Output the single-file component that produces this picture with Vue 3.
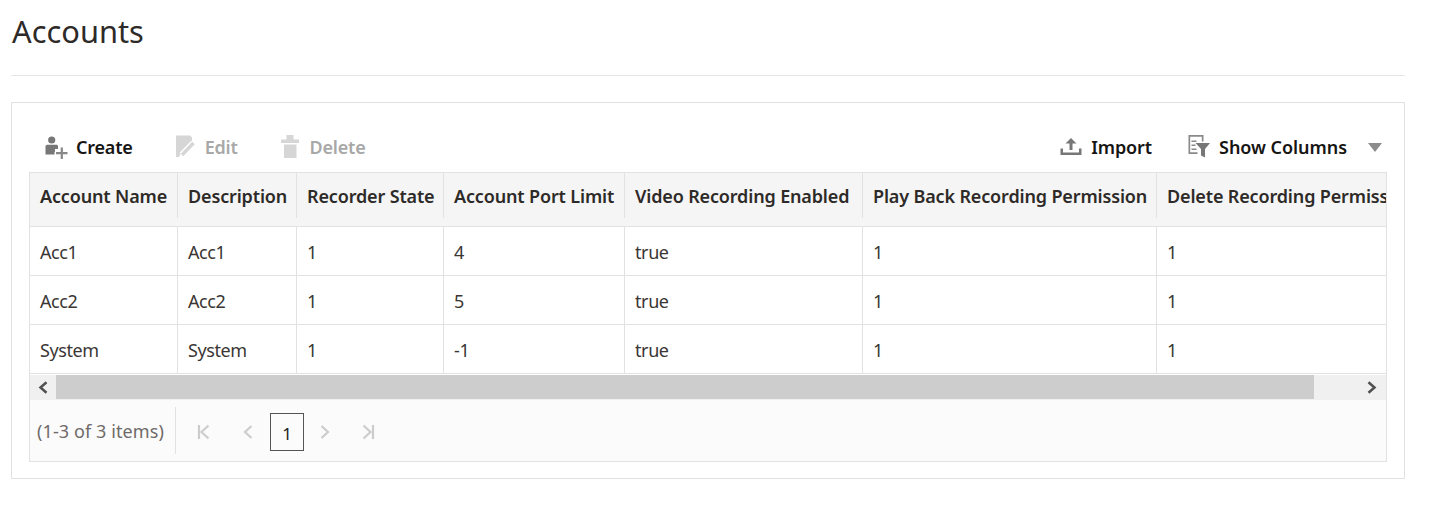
<script setup>
const cols = [
  { title: 'Account Name', w: 148 },
  { title: 'Description', w: 119 },
  { title: 'Recorder State', w: 147 },
  { title: 'Account Port Limit', w: 181 },
  { title: 'Video Recording Enabled', w: 238 },
  { title: 'Play Back Recording Permission', w: 294 },
  { title: 'Delete Recording Permission', w: 260 }
]
const rows = [
  ['Acc1', 'Acc1', '1', '4', 'true', '1', '1'],
  ['Acc2', 'Acc2', '1', '5', 'true', '1', '1'],
  ['System', 'System', '1', '-1', 'true', '1', '1']
]
</script>

<template>
  <div class="page">
    <h1 class="title">Accounts</h1>
    <div class="rule"></div>
    <section class="card">
      <div class="toolbar">
        <div class="group">
          <button class="tool">
            <svg class="ico" width="24" height="24" viewBox="0 0 24 24"><circle cx="7.700" cy="5" r="3.600" fill="#777"/><path d="M1.500 11.500c0-1 .8-1.800 1.800-1.800h9c.8 0 1.500.5 1.700 1.200v3.100h-3v2.800h-0.500v2.700H1.500z" fill="#777"/><path d="M16.700 12.500h2.200V17H23.500v2.200H18.900V24h-2.200V19.200H12V17H16.700z" fill="#888"/></svg>
            <span>Create</span>
          </button>
          <button class="tool off edit">
            <svg class="ico" width="24" height="24" viewBox="0 0 24 24"><path d="M3 .5h14l2 2V6.500L8 18l-2 4H3z" fill="#d6d6d6"/><path d="M20.500 8L9 20" stroke="#fff" stroke-width="6.500" fill="none"/><path d="M20.500 8L9 20" stroke="#d6d6d6" stroke-width="3.500" fill="none"/></svg>
            <span>Edit</span>
          </button>
          <button class="tool off del">
            <svg class="ico" width="24" height="24" viewBox="0 0 24 24"><path d="M8.500 0h7v4.500h5.500V8H3V4.500h5.500z" fill="#d6d6d6"/><path d="M6 9.500h12.500V23H6z" fill="#d6d6d6"/></svg>
            <span>Delete</span>
          </button>
        </div>
        <div class="group">
          <button class="tool imp">
            <svg class="ico" width="24" height="24" viewBox="0 0 24 24"><path d="M12 3l5.500 5.500h-4V15h-3V8.500h-4z" fill="#777"/><path d="M1.500 13.500h2.500v4h16v-4h2.500v6.500h-21z" fill="#777"/></svg>
            <span>Import</span>
          </button>
          <button class="tool cols">
            <svg class="ico" width="24" height="24" viewBox="0 0 24 24"><path d="M1.500 0h15v6.500h-1.700V1.700H3.200v15.600h7.300V19H1.500z" fill="#8a8a8a"/><path d="M4.500 5.500h5V7h-5zM4.500 9.500h4V11h-4zM4.500 13.500h5V15h-5z" fill="#8a8a8a"/><path d="M8.500 8H23l-5 6v8.500l-4-2V14z" fill="#777"/></svg>
            <span>Show Columns</span>
          </button>
          <span class="caret"></span>
        </div>
      </div>

      <div class="grid">
        <div class="viewport">
          <table>
            <colgroup><col v-for="c in cols" :key="c.title" :style="{ width: c.w + 'px' }"></colgroup>
            <thead>
              <tr><th v-for="c in cols" :key="c.title"><span class="th">{{ c.title }}</span></th></tr>
            </thead>
            <tbody>
              <tr v-for="(r, i) in rows" :key="i"><td v-for="(v, j) in r" :key="j">{{ v }}</td></tr>
            </tbody>
          </table>
        </div>
        <div class="scrollbar">
          <span class="arrow">
            <svg width="12" height="13" viewBox="0 0 12 13"><path d="M9.500 1.200L3.500 6.500l6 5.300" fill="none" stroke="#505050" stroke-width="2.500"/></svg>
          </span>
          <div class="thumb"></div>
          <span class="arrow right">
            <svg width="12" height="13" viewBox="0 0 12 13"><path d="M2.500 1.200L8.500 6.500l-6 5.300" fill="none" stroke="#505050" stroke-width="2.500"/></svg>
          </span>
        </div>
        <div class="pager">
          <span class="count">(1-3 of 3 items)</span>
          <div class="pages">
            <svg class="pg first" width="14" height="16" viewBox="0 0 14 16"><path d="M2 1v14M11.500 1.500L4.500 8l7 6.500" fill="none" stroke="#ccc" stroke-width="2.200"/></svg>
            <svg class="pg prev" width="12" height="16" viewBox="0 0 12 16"><path d="M9.500 2L3 8l6.500 6" fill="none" stroke="#ccc" stroke-width="2.200"/></svg>
            <span class="num">1</span>
            <svg class="pg next" width="12" height="16" viewBox="0 0 12 16"><path d="M2.500 2L9 8l-6.500 6" fill="none" stroke="#ccc" stroke-width="2.200"/></svg>
            <svg class="pg last" width="14" height="16" viewBox="0 0 14 16"><path d="M12 1v14M2.500 1.500L9.500 8l-7 6.500" fill="none" stroke="#ccc" stroke-width="2.200"/></svg>
          </div>
        </div>
      </div>
    </section>
  </div>
</template>

<style scoped>
.page {
  width: 1394px;
  margin-left: 11px;
  font-family: "Noto Sans", "Open Sans", sans-serif;
  color: #2e2a28;
}
.title {
  margin: 0;
  height: 75px;
  box-sizing: border-box;
  padding: 10px 0 0 1px;
  font-size: 30.800px;
  line-height: 42px;
  font-weight: 400;
  color: #2e2a28;
}
.rule {
  height: 1px;
  background: #e6e6e6;
  margin-bottom: 26px;
}
.card {
  box-sizing: border-box;
  height: 377px;
  border: 1px solid #e2e2e2;
  padding: 0 17px;
}
.toolbar {
  height: 69px;
  box-sizing: border-box;
  padding: 27px 0 0 15px;
  display: flex;
  justify-content: space-between;
  align-items: flex-start;
}
.group { display: flex; align-items: center; height: 34px; }
.tool {
  display: flex;
  align-items: center;
  gap: 8px;
  border: 0;
  background: none;
  padding: 0;
  font: 600 18px/34px "Noto Sans", "Open Sans", sans-serif;
  letter-spacing: -0.2px;
  color: #161513;
}
.ico { display: block; }
.tool.off { color: #a8a8a8; }
.edit { margin-left: 40px; }
.del { margin-left: 40px; }
.imp { letter-spacing: -0.1px; }
.cols { margin-left: 35px; letter-spacing: -0.05px; }
.caret {
  margin-left: 21px;
  margin-right: 5px;
  width: 0;
  height: 0;
  border-left: 7px solid transparent;
  border-right: 7px solid transparent;
  border-top: 9px solid #8c8c8c;
}
.grid {
  box-sizing: border-box;
  height: 290px;
  border: 1px solid #e2e2e2;
}
.viewport { overflow: hidden; height: 202px; }
table {
  table-layout: fixed;
  border-collapse: separate;
  border-spacing: 0;
  width: 1387px;
}
th {
  height: 54px;
  box-sizing: border-box;
  background: #f5f5f5;
  border-bottom: 1px solid #e2e2e2;
  padding: 0;
  text-align: left;
  font-weight: 600;
  font-size: 18px;
  letter-spacing: -0.15px;
  white-space: nowrap;
  overflow: hidden;
  color: #2e2a28;
  vertical-align: top;
}
.th {
  display: block;
  height: 45px;
  line-height: 47px;
  padding-left: 10px;
  border-right: 1px solid #e2e2e2;
}
th:last-child .th { border-right: 0; }
td {
  height: 49px;
  box-sizing: border-box;
  padding: 2px 0 0 10px;
  border-right: 1px solid #e2e2e2;
  border-bottom: 1px solid #e2e2e2;
  font-size: 18px;
  letter-spacing: -0.4px;
  color: #3a3634;
}
td:last-child { border-right: 0; }
.scrollbar {
  height: 25px;
  background: #f0f0f0;
  display: flex;
  align-items: flex-start;
}
.arrow {
  width: 26px;
  height: 25px;
  display: flex;
  align-items: center;
  justify-content: center;
  flex: none;
}
.arrow.right { margin-left: auto; margin-right: 1px; }
.thumb {
  width: 1258px;
  height: 24px;
  background: #cdcdcd;
}
.pager {
  height: 61px;
  box-sizing: border-box;
  background: #fbfbfb;
  display: flex;
  align-items: flex-start;
  padding: 7px 0 0 7px;
}
.count {
  font-size: 18px;
  letter-spacing: 0.1px;
  color: #6f6a68;
  width: 138px;
  height: 47px;
  line-height: 49px;
  border-right: 1px solid #e2e2e2;
  white-space: nowrap;
}
.pages { display: flex; align-items: center; margin: 6px 0 0 21px; }
.pg { display: block; }
.prev { margin-left: 31px; }
.num {
  margin-left: 16px;
  width: 34px;
  height: 38px;
  box-sizing: border-box;
  border: 1px solid #555;
  text-align: center;
  font-size: 17px;
  line-height: 40px;
  color: #222;
}
.next { margin-left: 15px; }
.last { margin-left: 30px; }
</style>
